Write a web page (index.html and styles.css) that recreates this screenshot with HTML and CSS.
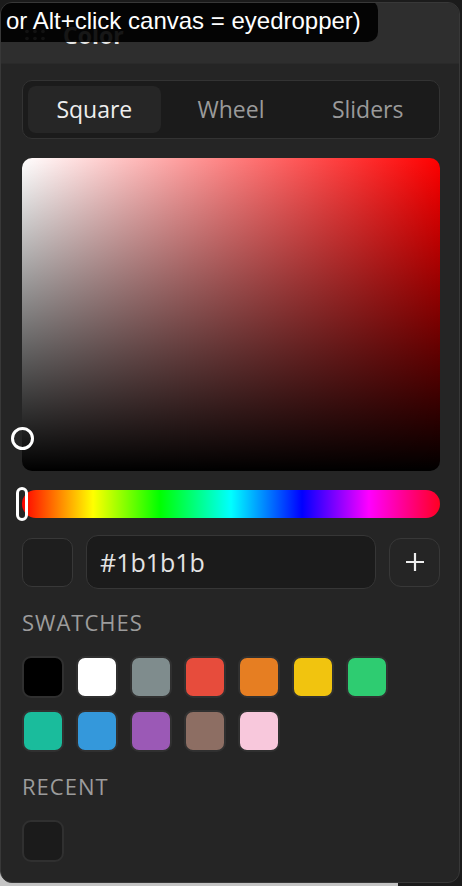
FILE: index.html
```html
<!DOCTYPE html>
<html lang="en">
<head>
    <meta charset="UTF-8">
    <meta name="viewport" content="width=device-width, initial-scale=1.0">
    <title>Color</title>
    <link rel="stylesheet" href="styles.css">
</head>
<body>

<div class="panel">
    <div class="panel-header">
        <svg class="grip" width="22" height="12" viewBox="0 0 22 12">
            <circle cx="3" cy="2.5" r="1.8"/><circle cx="11" cy="2.5" r="1.8"/><circle cx="19" cy="2.5" r="1.8"/>
            <circle cx="3" cy="9.5" r="1.8"/><circle cx="11" cy="9.5" r="1.8"/><circle cx="19" cy="9.5" r="1.8"/>
        </svg>
        <span class="panel-title">Color</span>
    </div>

    <div class="panel-body">
        <div class="tabs">
            <div class="tab active">Square</div>
            <div class="tab">Wheel</div>
            <div class="tab">Sliders</div>
        </div>

        <div class="sv-square">
            <div class="sv-cursor"></div>
        </div>

        <div class="hue-bar">
            <div class="hue-thumb"></div>
        </div>

        <div class="value-row">
            <div class="preview"></div>
            <div class="hex-input">#1b1b1b</div>
            <div class="add-btn">
                <svg width="20" height="20" viewBox="0 0 20 20">
                    <path d="M10 1v18M1 10h18" stroke="#eee" stroke-width="2.2" fill="none"/>
                </svg>
            </div>
        </div>

        <div class="section-label">Swatches</div>
        <div class="swatches">
            <div class="swatch" style="background:#000000"></div>
            <div class="swatch" style="background:#ffffff"></div>
            <div class="swatch" style="background:#7f8c8d"></div>
            <div class="swatch" style="background:#e74c3c"></div>
            <div class="swatch" style="background:#e67e22"></div>
            <div class="swatch" style="background:#f1c40f"></div>
            <div class="swatch" style="background:#2ecc71"></div>
            <div class="swatch" style="background:#1abc9c"></div>
            <div class="swatch" style="background:#3498db"></div>
            <div class="swatch" style="background:#9b59b6"></div>
            <div class="swatch" style="background:#8d6e63"></div>
            <div class="swatch" style="background:#f8c8dc"></div>
        </div>

        <div class="section-label recent-label">Recent</div>
        <div class="swatches">
            <div class="swatch" style="background:#1b1b1b"></div>
        </div>
    </div>

    <div class="tooltip">or Alt+click canvas = eyedropper)</div>
</div>
<div class="under-strip"></div>

</body>
</html>
```

FILE: styles.css
```css
body {
    margin: 0;
    background-color: #1b1b1b;
    font-family: "Open Sans", "Noto Sans", sans-serif;
    overflow: hidden;
}
.panel {
    position: relative;
    z-index: 1;
    box-sizing: border-box;
    width: 460px;
    height: 881px;
    margin-top: 2px;
    background-color: #252525;
    border: 1px solid #383838;
    border-radius: 12px;
    overflow: hidden;
}
.panel-header {
    height: 60px;
    background-color: #2e2e2e;
    border-bottom: 1px solid #2a2a2a;
    display: flex;
    align-items: center;
    padding-left: 23px;
}
.grip {
    fill: #bbb;
    margin-top: 4px;
}
.panel-title {
    color: #e6e6e6;
    font-weight: 700;
    font-size: 23px;
    margin-left: 17px;
    margin-top: 4px;
}
.panel-body {
    padding: 16px 19px 0 21px;
}
.tabs {
    display: flex;
    gap: 4px;
    padding: 5px;
    background-color: #1b1b1b;
    border: 1px solid #333;
    border-radius: 10px;
}
.tab {
    flex: 1;
    height: 47px;
    line-height: 47px;
    text-align: center;
    font-size: 23px;
    color: #9a9a9a;
    border-radius: 8px;
}
.tab.active {
    background-color: #262626;
    color: #eeeeee;
}
.sv-square {
    position: relative;
    height: 313px;
    margin-top: 19px;
    border-radius: 10px;
    background: linear-gradient(to bottom, rgba(0,0,0,0), #000),
                linear-gradient(to right, #fff, #ff0000);
}
.sv-cursor {
    position: absolute;
    left: -11px;
    top: 269px;
    width: 17px;
    height: 17px;
    border: 3px solid #fff;
    border-radius: 50%;
}
.hue-bar {
    position: relative;
    height: 28px;
    margin-top: 19px;
    border-radius: 14px;
    background: linear-gradient(to right, #ff0000 0%, #ffff00 17%, #00ff00 33%, #00ffff 50%, #0000ff 67%, #ff00ff 83%, #ff0022 100%);
}
.hue-thumb {
    position: absolute;
    left: -6px;
    top: -3px;
    width: 6px;
    height: 28px;
    border: 3px solid #fff;
    border-radius: 6px;
}
.value-row {
    display: flex;
    align-items: center;
    gap: 13px;
    margin-top: 17px;
}
.preview {
    box-sizing: border-box;
    width: 51px;
    height: 49px;
    background-color: #1e1e1e;
    border: 1px solid #383838;
    border-radius: 10px;
}
.hex-input {
    box-sizing: border-box;
    flex: 1;
    height: 54px;
    line-height: 52px;
    padding-left: 13px;
    font-size: 25px;
    color: #e4e4e4;
    background-color: #1b1b1b;
    border: 1px solid #363636;
    border-radius: 12px;
}
.add-btn {
    box-sizing: border-box;
    width: 51px;
    height: 49px;
    display: flex;
    align-items: center;
    justify-content: center;
    border: 1px solid #383838;
    border-radius: 12px;
}
.section-label {
    margin-top: 18px;
    font-size: 22px;
    line-height: 30px;
    letter-spacing: 1px;
    text-transform: uppercase;
    color: #9c9c9c;
}
.recent-label {
    margin-top: 19px;
}
.swatches {
    display: grid;
    grid-template-columns: repeat(7, 42px);
    gap: 12px;
    margin-top: 19px;
}
.swatch {
    box-sizing: border-box;
    width: 42px;
    height: 42px;
    border: 2px solid #303030;
    border-radius: 9px;
}
.tooltip {
    position: absolute;
    left: -20px;
    top: -3px;
    width: 397px;
    height: 42px;
    box-sizing: border-box;
    padding-left: 25px;
    line-height: 42px;
    font-family: "Liberation Sans", Arial, sans-serif;
    font-size: 24px;
    color: #fff;
    background-color: rgba(0, 0, 0, 0.9);
    border-radius: 10px;
}
.under-strip {
    width: 398px;
    height: 20px;
    margin-top: -16px;
    background-color: #c4c4c4;
}
```
